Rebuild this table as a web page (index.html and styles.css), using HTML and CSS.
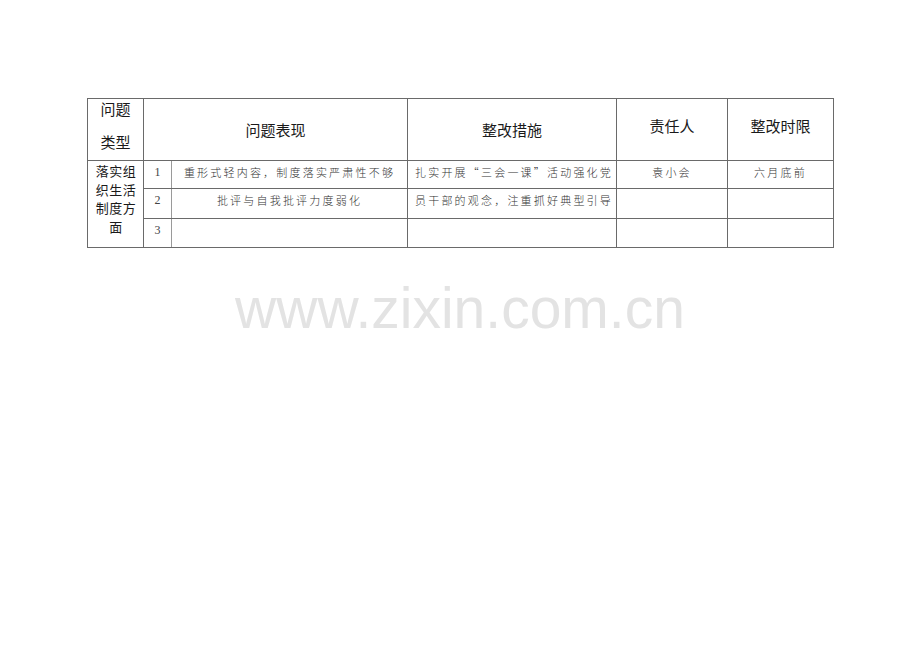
FILE: index.html
```html
<!DOCTYPE html>
<html lang="zh">
<head>
<meta charset="utf-8">
<title>问题整改表</title>
<link rel="stylesheet" href="styles.css">
</head>
<body>
<div class="page">
  <table class="grid">
    <colgroup>
      <col class="c-type"><col class="c-num"><col class="c-issue"><col class="c-measure"><col class="c-owner"><col class="c-date">
    </colgroup>
    <thead>
      <tr class="head-row">
        <th class="type-head"><div class="l1">问题</div><div class="l2">类型</div></th>
        <th colspan="2">问题表现</th>
        <th>整改措施</th>
        <th class="raised">责任人</th>
        <th class="raised">整改时限</th>
      </tr>
    </thead>
    <tbody>
      <tr class="r1">
        <td rowspan="3" class="type-cell">落实组织生活制度方面</td>
        <td class="num">1</td>
        <td class="txt center">重形式轻内容，制度落实严肃性不够</td>
        <td class="txt left">扎实开展“三会一课”活动强化党</td>
        <td class="txt center">袁小会</td>
        <td class="txt center">六月底前</td>
      </tr>
      <tr class="r2">
        <td class="num">2</td>
        <td class="txt center">批评与自我批评力度弱化</td>
        <td class="txt left">员干部的观念，注重抓好典型引导</td>
        <td class="txt"></td>
        <td class="txt"></td>
      </tr>
      <tr class="r3">
        <td class="num">3</td>
        <td class="txt"></td>
        <td class="txt"></td>
        <td class="txt"></td>
        <td class="txt"></td>
      </tr>
    </tbody>
  </table>
  <div class="watermark">www.zixin.com.cn</div>
</div>
</body>
</html>
```
FILE: styles.css
```css
html, body {
  margin: 0;
  padding: 0;
  background: #ffffff;
}
.page {
  width: 920px;
  padding-top: 98px;
}
.grid {
  margin-left: 87px;
  width: 746px;
  table-layout: fixed;
  border-collapse: collapse;
  border: 1px solid #555;
  font-family: "Noto Sans CJK SC", "Liberation Sans", sans-serif;
  color: #1a1a1a;
}
.c-type { width: 56px; }
.c-num { width: 28px; }
.c-issue { width: 236px; }
.c-measure { width: 209px; }
.c-owner { width: 111px; }
.c-date { width: 106px; }

.grid th, .grid td {
  border: 1px solid #6a6a6a;
  padding: 0;
}
.head-row { height: 62px; }
.grid th {
  font-size: 15px;
  font-weight: normal;
  text-align: center;
  vertical-align: middle;
  line-height: 20px;
}
.grid th.raised { padding-bottom: 8px; }
.grid th.type-head {
  vertical-align: top;
  padding-top: 0;
}
.type-head .l1 { line-height: 20px; }
.type-head .l2 { line-height: 20px; margin-top: 13px; }

.r1 { height: 28px; }
.r2 { height: 30px; }
.r3 { height: 29px; }

.grid td.type-cell {
  font-size: 13px;
  line-height: 18.5px;
  text-align: center;
  vertical-align: top;
  padding: 1px 3px 0 4px;
  letter-spacing: 0.5px;
}
.grid td.num {
  font-family: "Liberation Serif", serif;
  font-size: 12px;
  text-align: center;
  vertical-align: top;
  padding-top: 4px;
  line-height: 14px;
  color: #444;
  border-right-color: #9a9a9a;
}
.grid td.txt {
  font-size: 11px;
  font-weight: 300;
  line-height: 14px;
  letter-spacing: 2.2px;
  vertical-align: top;
  padding-top: 4px;
  color: #333;
  white-space: nowrap;
  overflow: hidden;
}
.grid td.center { text-align: center; }
.grid td.left { text-align: left; padding-left: 7px; }

.watermark {
  margin-top: 32px;
  text-align: center;
  font-family: "Liberation Sans", Arial, sans-serif;
  font-size: 57px;
  line-height: 56px;
  color: #e3e3e3;
}
```
